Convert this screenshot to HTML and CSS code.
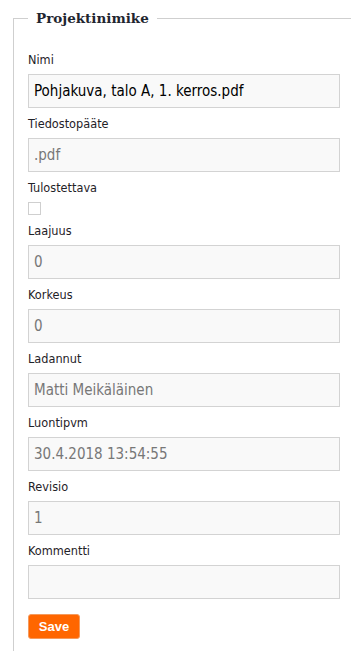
FILE: index.html
```html
<!DOCTYPE html>
<html lang="fi">
<head>
    <meta charset="UTF-8">
    <meta name="viewport" content="width=device-width, initial-scale=1.0">
    <title>Projektinimike</title>
    <link rel="stylesheet" href="styles.css">
</head>
<body>
    <fieldset class="item-form">
        <legend>Projektinimike</legend>
        <div class="field">
            <label for="nimi">Nimi</label>
            <input type="text" id="nimi" value="Pohjakuva, talo A, 1. kerros.pdf">
        </div>
        <div class="field">
            <label for="paate">Tiedostopääte</label>
            <input type="text" id="paate" value=".pdf" readonly class="ro">
        </div>
        <div class="field">
            <label for="tulostettava">Tulostettava</label>
            <input type="checkbox" id="tulostettava" class="check">
        </div>
        <div class="field">
            <label for="laajuus">Laajuus</label>
            <input type="text" id="laajuus" value="0" readonly class="ro">
        </div>
        <div class="field">
            <label for="korkeus">Korkeus</label>
            <input type="text" id="korkeus" value="0" readonly class="ro">
        </div>
        <div class="field">
            <label for="ladannut">Ladannut</label>
            <input type="text" id="ladannut" value="Matti Meikäläinen" readonly class="ro">
        </div>
        <div class="field">
            <label for="luontipvm">Luontipvm</label>
            <input type="text" id="luontipvm" value="30.4.2018 13:54:55" readonly class="ro">
        </div>
        <div class="field">
            <label for="revisio">Revisio</label>
            <input type="text" id="revisio" value="1" readonly class="ro">
        </div>
        <div class="field">
            <label for="kommentti">Kommentti</label>
            <input type="text" id="kommentti" value="">
        </div>
        <button type="button" class="save-btn">Save</button>
    </fieldset>
</body>
</html>
```

FILE: styles.css
```css
html, body {
    margin: 0;
    padding: 0;
    overflow: hidden;
    background: #fff;
}
body {
    font-family: Tahoma, "DejaVu Sans", sans-serif;
    color: #222;
    height: 651px;
}
.item-form {
    margin: 8px 0 0 13px;
    padding: 24px 11px 60px 14px;
    border: 1px solid #cfcfcf;
    border-right: none;
    border-bottom: none;
    min-width: 0;
    min-height: 700px;
}
.item-form legend {
    padding: 0 8px;
    font-family: "DejaVu Serif", "Liberation Serif", serif;
    font-weight: bold;
    font-size: 13.5px;
    line-height: 20px;
    color: #1f2630;
}
.field {
    margin-bottom: 8px;
}
.field label {
    display: block;
    font-family: "DejaVu Sans Condensed", "DejaVu Sans", sans-serif;
    font-size: 12.6px;
    line-height: 16px;
    margin-bottom: 6px;
    color: #1f2228;
}
.field input[type="text"] {
    display: block;
    box-sizing: border-box;
    width: 100%;
    height: 34px;
    margin: 0;
    padding: 0 5px;
    font-family: "DejaVu Sans Condensed", "DejaVu Sans", sans-serif;
    font-size: 15px;
    color: #000;
    background: #f9f9f9;
    border: 1px solid #d3d3d3;
    border-radius: 0;
    outline: none;
}
.field input.ro {
    color: #777;
}
.field input.check {
    display: block;
    -webkit-appearance: none;
    appearance: none;
    width: 13px;
    height: 13px;
    margin: 0;
    border: 1px solid #cfcfcf;
    background: #fff;
}
.save-btn {
    display: block;
    margin-top: 15px;
    width: 52px;
    height: 25px;
    padding: 0;
    font-family: Arial, "Liberation Sans", sans-serif;
    font-weight: bold;
    font-size: 13px;
    color: #fff;
    background: #ff6600;
    border: 1px solid #f59a5c;
    border-radius: 3px;
    cursor: pointer;
}
```
